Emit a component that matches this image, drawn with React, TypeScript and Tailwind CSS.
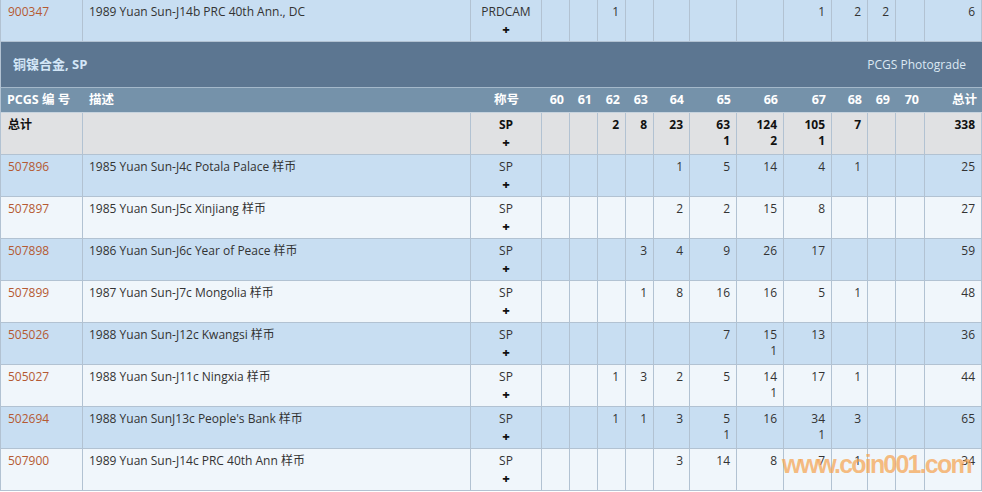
const cols = "grid grid-cols-[82px_388px_71px_28px_28px_28px_28px_36px_47px_47px_48px_36px_28px_29px_57px]";
const grades = ["60", "61", "62", "63", "64", "65", "66", "67", "68", "69", "70"];

type Row = {
  id: string;
  desc: string;
  des: string;
  vals: Record<string, string>;
  plus?: Record<string, string>;
  total: string;
};

const topRow: Row = {
  id: "900347",
  desc: "1989 Yuan Sun-J14b PRC 40th Ann., DC",
  des: "PRDCAM",
  vals: { "62": "1", "67": "1", "68": "2", "69": "2" },
  total: "6",
};

const totals: Row = {
  id: "总计",
  desc: "",
  des: "SP",
  vals: { "62": "2", "63": "8", "64": "23", "65": "63", "66": "124", "67": "105", "68": "7" },
  plus: { "65": "1", "66": "2", "67": "1" },
  total: "338",
};

const rows: Row[] = [
  { id: "507896", desc: "1985 Yuan Sun-J4c Potala Palace 样币", des: "SP", vals: { "64": "1", "65": "5", "66": "14", "67": "4", "68": "1" }, total: "25" },
  { id: "507897", desc: "1985 Yuan Sun-J5c Xinjiang 样币", des: "SP", vals: { "64": "2", "65": "2", "66": "15", "67": "8" }, total: "27" },
  { id: "507898", desc: "1986 Yuan Sun-J6c Year of Peace 样币", des: "SP", vals: { "63": "3", "64": "4", "65": "9", "66": "26", "67": "17" }, total: "59" },
  { id: "507899", desc: "1987 Yuan Sun-J7c Mongolia 样币", des: "SP", vals: { "63": "1", "64": "8", "65": "16", "66": "16", "67": "5", "68": "1" }, total: "48" },
  { id: "505026", desc: "1988 Yuan Sun-J12c Kwangsi 样币", des: "SP", vals: { "65": "7", "66": "15", "67": "13" }, plus: { "66": "1" }, total: "36" },
  { id: "505027", desc: "1988 Yuan Sun-J11c Ningxia 样币", des: "SP", vals: { "62": "1", "63": "3", "64": "2", "65": "5", "66": "14", "67": "17", "68": "1" }, plus: { "66": "1" }, total: "44" },
  { id: "502694", desc: "1988 Yuan SunJ13c People's Bank 样币", des: "SP", vals: { "62": "1", "63": "1", "64": "3", "65": "5", "66": "16", "67": "34", "68": "3" }, plus: { "65": "1", "67": "1" }, total: "65" },
  { id: "507900", desc: "1989 Yuan Sun-J14c PRC 40th Ann 样币", des: "SP", vals: { "64": "3", "65": "14", "66": "8", "67": "7", "68": "1" }, total: "34" },
];

function DataRow({ row, bg, bold, link = true }: { row: Row; bg: string; bold?: boolean; link?: boolean }) {
  const cell = "border-r border-[#b2c2d2] pt-[4px] leading-[16px]";
  return (
    <div className={`${cols} h-[42px] border-b border-[#b2c2d2] ${bg} ${bold ? "font-bold text-[#111]" : "text-[#333]"}`}>
      <div className={`${cell} pl-[7px] ${link ? "text-[#b55a32]" : ""}`}>{row.id}</div>
      <div className={`${cell} pl-[6px]`}>{row.desc}</div>
      <div className={`${cell} flex flex-col items-center`}>
        <span>{row.des}</span>
        <span className="font-extrabold text-[#111] text-[13px] leading-[18px]">+</span>
      </div>
      {grades.map((g) => (
        <div key={g} className={`${cell} flex flex-col items-end pr-[6px]`}>
          <span>{row.vals[g] ?? ""}</span>
          {row.plus?.[g] && <span>{row.plus[g]}</span>}
        </div>
      ))}
      <div className={`${cell} text-right pr-[6px]`}>{row.total}</div>
    </div>
  );
}

export default function App() {
  return (
    <div
      className="relative w-[982px] h-[492px] overflow-hidden bg-white text-[12px]"
      style={{ fontFamily: "'Open Sans', 'Noto Sans CJK SC', sans-serif" }}
    >
      <div className="border-l border-[#b2c2d2]">
        <DataRow row={topRow} bg="bg-[#c8def2]" />

        {/* Group header */}
        <div className="h-[46px] flex items-center justify-between pl-[12px] pr-[16px] bg-[#5c7691] border-b border-[#a4b8ca]">
          <span className="text-[13px] font-bold text-[#d3e6f7]">铜镍合金, SP</span>
          <span className="text-[12px] text-[#dbe8f3]">PCGS Photograde</span>
        </div>

        {/* Column header */}
        <div className={`${cols} h-[25px] items-center bg-[#7592aa] border-b border-[#c7d3de] text-white font-bold text-[12.5px]`}>
          <div className="pl-[6px] whitespace-nowrap">PCGS 编 号</div>
          <div className="pl-[6px]">描述</div>
          <div className="text-center">称号</div>
          {grades.map((g) => (
            <div key={g} className="text-right pr-[6px]">{g}</div>
          ))}
          <div className="text-right pr-[5px]">总计</div>
        </div>

        <DataRow row={totals} bg="bg-[#e0e1e3]" bold link={false} />
        {rows.map((r, i) => (
          <DataRow key={r.id} row={r} bg={i % 2 === 0 ? "bg-[#c8def2]" : "bg-[#f0f6fb]"} />
        ))}
      </div>

      {/* Watermark */}
      <div
        className="absolute left-[782px] top-[453px] text-[25px] leading-[22px] font-bold tracking-[-1.8px] text-[#f7a14a]/70 pointer-events-none"
        style={{ fontFamily: "'Liberation Sans', Arial, sans-serif" }}
      >
        www.coin001.com
      </div>
    </div>
  );
}
